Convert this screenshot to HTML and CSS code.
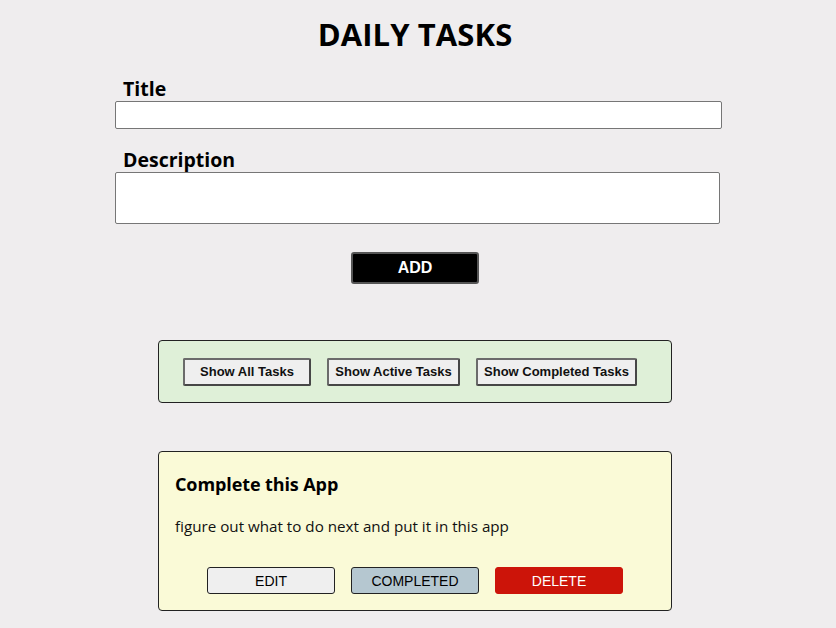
FILE: index.html
```html
<!DOCTYPE html>
<html>
<head>
<meta charset="utf-8">
<title>Daily Tasks</title>
<link rel="stylesheet" href="styles.css">
</head>
<body>
<div class="app">
  <h1 class="app-title">DAILY TASKS</h1>
  <form class="task-form">
    <label class="field-label" for="title">Title</label>
    <input class="title-input" id="title" type="text">
    <label class="field-label desc-label" for="desc">Description</label>
    <textarea class="desc-input" id="desc"></textarea>
    <div class="add-row"><button type="button" class="add-btn">ADD</button></div>
  </form>
  <div class="filter-box">
    <button class="filter-btn w1">Show All Tasks</button>
    <button class="filter-btn w2">Show Active Tasks</button>
    <button class="filter-btn w3">Show Completed Tasks</button>
  </div>
  <div class="task-card">
    <h3 class="task-title">Complete this App</h3>
    <p class="task-desc">figure out what to do next and put it in this app</p>
    <div class="task-actions">
      <button class="act-btn edit">EDIT</button>
      <button class="act-btn done">COMPLETED</button>
      <button class="act-btn del">DELETE</button>
    </div>
  </div>
</div>
</body>
</html>
```
FILE: styles.css
```css
html, body {
  margin: 0;
  padding: 0;
  background: #efedee;
}
body {
  font-family: "Open Sans", "Noto Sans", sans-serif;
  color: #000;
}
.app {
  width: 830px;
  padding-top: 14px;
}
.app-title {
  margin: 0;
  text-align: center;
  font-size: 31px;
  font-weight: 700;
  line-height: 40px;
  letter-spacing: 0.1px;
}
.task-form {
  margin: 0 0 0 115px;
  width: 607px;
  display: flex;
  flex-direction: column;
}
.field-label {
  font-size: 19.5px;
  font-weight: 700;
  line-height: 24px;
  padding-left: 8px;
  margin-top: 23px;
  letter-spacing: 0;
}
.desc-label {
  margin-top: 19px;
}
.title-input {
  box-sizing: border-box;
  height: 28px;
  width: 607px;
  margin: 0;
  border: 1px solid #767676;
  border-radius: 2px;
  background: #fff;
}
.desc-input {
  box-sizing: border-box;
  height: 52px;
  width: 605px;
  margin: 0;
  border: 1px solid #767676;
  border-radius: 2px;
  background: #fff;
  resize: none;
}
.add-row {
  display: flex;
  justify-content: center;
  margin-top: 28px;
  padding-right: 7px;
}
.add-btn {
  box-sizing: border-box;
  width: 128px;
  height: 32px;
  background: #000;
  color: #fff;
  border: 2px solid #555;
  border-radius: 3px;
  font-family: "Liberation Sans", Arial, sans-serif;
  font-weight: 700;
  font-size: 16px;
}
.filter-box {
  box-sizing: border-box;
  margin: 56px 0 0 158px;
  width: 514px;
  height: 63px;
  background: #dff0d8;
  border: 1px solid #222;
  border-radius: 4px;
  display: flex;
  align-items: center;
  gap: 16px;
  padding-left: 24px;
}
.filter-btn {
  box-sizing: border-box;
  height: 28px;
  padding: 0;
  background: #efefef;
  border: 2px solid #474747;
  border-top-color: #6b6b6b;
  border-left-color: #6b6b6b;
  border-radius: 2px;
  font-family: "Liberation Sans", Arial, sans-serif;
  font-weight: 700;
  font-size: 13px;
  color: #111;
}
.w1 { width: 128px; }
.w2 { width: 133px; }
.w3 { width: 161px; }
.task-card {
  box-sizing: border-box;
  margin: 48px 0 0 158px;
  width: 514px;
  height: 160px;
  background: #fafad7;
  border: 1px solid #222;
  border-radius: 4px;
  padding: 19px 16px 0 16px;
}
.task-title {
  margin: 0;
  font-size: 18px;
  font-weight: 700;
  line-height: 26px;
  letter-spacing: -0.1px;
}
.task-desc {
  margin: 18px 0 0 0;
  font-size: 15.2px;
  line-height: 22px;
  color: #111;
  letter-spacing: 0;
}
.task-actions {
  display: flex;
  justify-content: center;
  gap: 16px;
  margin-top: 30px;
}
.act-btn {
  box-sizing: border-box;
  width: 128px;
  height: 27px;
  padding: 0;
  border: 1px solid #222;
  border-radius: 3px;
  font-family: "Liberation Sans", Arial, sans-serif;
  font-size: 14px;
  color: #000;
}
.edit { background: #efefef; }
.done { background: #b5c7d0; }
.del { background: #cc1409; color: #fff; border-color: #cc1409; }
```
